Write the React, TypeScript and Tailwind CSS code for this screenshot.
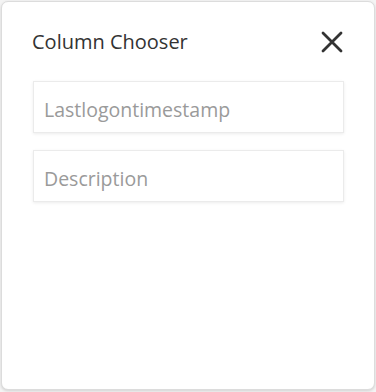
const columns = ["Lastlogontimestamp", "Description"]

const CloseIcon = () => (
    <svg width="22" height="22" viewBox="0 0 22 22" className="text-[#333]">
        <path d="M2 2 L20 20 M20 2 L2 20" stroke="currentColor" strokeWidth="2.8" strokeLinecap="round" fill="none" />
    </svg>
)

const App = () => {
    return (
        <div className="w-[376px] h-[392px] bg-[#f4f4f4] p-[1px] pb-[2px]" style={{ fontFamily: '"Open Sans", "Noto Sans", sans-serif' }}>
            <div className="h-full bg-white rounded-[7px] border border-[#dcdcdc] shadow-[0_1px_3px_rgba(0,0,0,0.15)] flex flex-col">
                <div className="flex items-center justify-between pl-[30px] pr-[31px] pt-[26px] pb-[25px]">
                    <h2 className="text-[20px] leading-[28px] text-[#333]">Column Chooser</h2>
                    <CloseIcon />
                </div>

                <div className="flex flex-col gap-[17px] pl-[31px] pr-[30px]">
                    {columns.map(column => (
                        <div
                            key={column}
                            className="h-[52px] flex items-center px-[10px] pt-[5px] border border-[#ebebeb] shadow-[0_1px_3px_rgba(0,0,0,0.08)] bg-white"
                        >
                            <span className="text-[19.5px] text-[#9a9a9a]">{column}</span>
                        </div>
                    ))}
                </div>
            </div>
        </div>
    )
}

export default App
